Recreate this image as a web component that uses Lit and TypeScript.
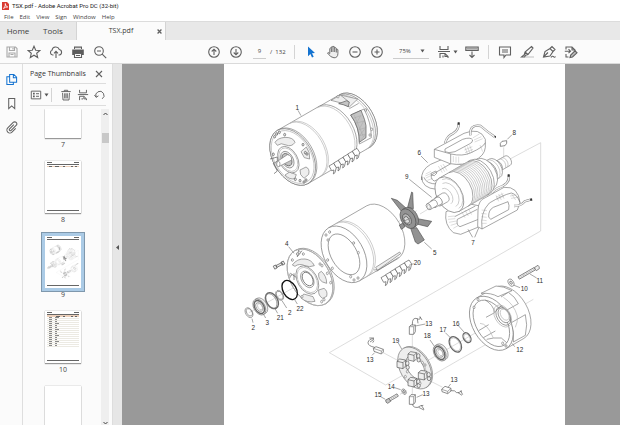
import { LitElement, html, svg, css } from "lit";
import { customElement } from "lit/decorators.js";

/* ---------- geometry helpers for the exploded view ---------- */
const COS = 0.866;
const SIN = 0.5;

// Circle of radius a seen along the machine axis.
const disc = (x: number, y: number, a: number, cls = "", k = 0.64) =>
  svg`<ellipse class=${cls} rx=${a} ry=${a * k} transform="translate(${x} ${y}) rotate(60)"></ellipse>`;

// Only the far half of such a circle, at a distance along the axis.
const seam = (x: number, y: number, a: number, d: number, cls = "lt") => {
  const cx = x + d * COS;
  const cy = y - d * SIN;
  return svg`<path class="nf ${cls}" d="M${cx - a * SIN} ${cy - a * COS}A${a} ${a * 0.64} 60 0 1 ${cx + a * SIN} ${cy + a * COS}"></path>`;
};

// Cylinder whose near face is centred on x, y.
const tube = (x: number, y: number, a: number, len: number, cls = "") => {
  const ex = x + len * COS;
  const ey = y - len * SIN;
  const dx = a * SIN;
  const dy = a * COS;
  return svg`<path class=${cls} d="M${x - dx} ${y - dy}L${ex - dx} ${ey - dy}A${a} ${a * 0.64} 60 0 1 ${ex + dx} ${ey + dy}L${x + dx} ${y + dy}Z"></path>${disc(x, y, a, cls)}`;
};

const bearing = (x: number, y: number) => svg`
  ${tube(x, y, 26, 7, "gr")}${disc(x, y, 21, "nf thick")}${disc(x, y, 14, "")}${disc(x + 2, y - 1, 10, "nf lt")}`;

const comb = (x: number, y: number) => svg`<g transform="translate(${x} ${y})">
  ${[0, 1, 2, 3, 4, 5].map(
    (i) => svg`<path class="dk" d="M${i * 14} ${-i * 9}l-8 -14l14 -8l8 12l-4 16l-5 4l2 -12z"></path>`
  )}</g>`;

const wire = (d: string) => svg`<path class="w1" d=${d}></path><path class="w2" d=${d}></path>`;

const screw = (x: number, y: number, len: number) => svg`
  <g transform="translate(${x} ${y}) rotate(-30)">
    <path class="dk" d="M0 -4h${len}v8h${-len}z"></path>
    <path class="nf lt" d="M2 0h${len - 4}M${len * 0.3} -4v8M${len * 0.5} -4v8M${len * 0.7} -4v8"></path>
  </g>`;

const holes = (pts: number[][]) =>
  pts.map(([x, y]) => svg`<ellipse cx=${x} cy=${y} rx="3" ry="4"></ellipse>`);

const holder = (x: number, y: number) => svg`<g class="gr dk" transform="translate(${x} ${y})">
  <path d="M-12 -8l8 -7l18 3v18l-8 8l-18 -4z"></path><path class="nf" d="M-12 -8l18 4l8 -8M6 -4v18"></path>
  <ellipse cx="19" cy="-2" rx="5" ry="7"></ellipse><ellipse cx="20" cy="10" rx="5" ry="6"></ellipse></g>`;

const guides = svg`<g class="guide">
  <path d="M600 462L640 438M870 297L962 248V513L328 878L497 975L590 922M642 943L885 803M600 915L940 718M510 500L590 452"></path>
  <path d="M851 262V308M577 822V870M577 975V1003M488 877L540 905M625 960L668 982M540 1003L560 992M87 758L262 660"></path>
</g>`;

const motor = svg`
  ${tube(404, 183, 91, 0)}
  ${tube(340, 220, 91, 68)}
  ${seam(340, 220, 91, 62)}
  <path class="gr" d="M333 121l28 -16l52 12l-25 24q-25 -15 -55 -20z"></path>
  <path class="dk mid" d="M356 131l24 -9l8 4l-3 14q-15 -7 -29 -9z"></path>
  <path class="nf" d="M388 146l28 -16M361 105l25 20"></path>
  <path d="M392 165l40 -18q22 40 22 86l-36 19q2 -48 -26 -87z"></path>
  <path class="mid dk" d="M392 165l31 -14l4 10q8 18 11 36v36l-20 14q1 -45 -26 -82z"></path>
  <path class="hl" d="M402 174l20 -7l-13 23l22 -7l-14 26l20 -6l-18 24l18 -5l-16 20M402 164l28 66"></path>
  ${holes([[354, 110], [437, 150], [455, 208], [450, 225]])}
  ${tube(218, 291, 92, 144)}
  ${seam(218, 291, 92, 45)}${seam(218, 291, 92, 40)}${seam(218, 291, 91, 138)}
  ${comb(335, 332)}
  ${tube(218, 291, 92, 5)}
  ${disc(218, 291, 86, "nf lt")}
  <path class="gr" d="M165 247q8 -13 30 -15q25 0 30 15q-10 15 -27 8q-15 -8 -26 1z"></path>
  <path class="gr" d="M243 275l16 -14q12 15 10 36l-16 -4zM240 330l18 -9q12 5 8 22l-14 12q-14 -10 -12 -25zM195 345l14 -9l20 8l-5 12q-15 4 -29 -11z"></path>
  <path class="nf dk" d="M150 297l22 -6v12l-12 8l12 22l-10 8"></path>
  ${disc(205, 299, 43, "")}${disc(205, 299, 38, "nf lt")}${disc(202, 299, 27, "gr")}${disc(201, 299, 20, "mid dk")}
  <path d="M202 284q14 2 13 16l-39 20q-7 -5 -5 -15z"></path><ellipse cx="175" cy="312" rx="5" ry="8"></ellipse>
  <g class="gr dk">${holes([[170, 222], [178, 217], [194, 224], [249, 254], [256, 278], [261, 282], [160, 283], [240, 362], [258, 360], [252, 366], [226, 358], [164, 230]])}</g>
  <path class="nf" d="M234 151l9 16"></path>`;

const rotor = svg`
  ${wire("M675 250Q680 228 700 220Q718 208 716 190")}
  <path d="M605 360Q602 330 632 313L690 288L760 300L700 380L650 388Q605 385 605 350Z"></path>
  <path class="nf" d="M634 345l60 -35l30 3M634 345q-2 15 10 18l40 -22M612 352q6 20 40 20M633 340l14 -7l4 6l-8 8l-9 -2z"></path>
  <path class="hl" d="M617 342l16 -8M616 348l18 -8M618 354l16 -8M622 361l16 -6M655 318l12 20M662 315l12 20M669 312l12 20"></path>
  <path d="M643 268L732 220Q780 200 796 238L796 262Q794 288 762 302Q730 318 690 311L643 292Z"></path>
  <path class="nf" d="M643 268l50 14q35 8 60 -4q38 -17 43 -30M692 282v28"></path>
  <path d="M675 267L728 238Q752 230 758 240Q758 248 748 252L705 275Q684 281 675 275Z"></path>
  <path class="hl" d="M735 262l8 22M742 259l8 22M749 256l8 22M733 270l24 -10M735 278l24 -10M758 234l20 -12M762 240l22 -10M764 246l24 -10M700 288v18M708 290v18M716 290v18M780 255l8 20"></path>
  ${wire("M751 226Q748 192 782 198Q800 214 826 232")}
  <path d="M678 455Q672 495 700 518L722 523L790 495L790 440L740 430Z"></path>
  <path class="nf" d="M712 478l60 -30M712 478q-4 18 8 22l55 -22M704 470l62 -32"></path>
  <path class="hl" d="M684 470l20 -2M684 478l22 -2M687 487l22 -4M692 496l20 -6M700 505l14 -8M725 455l10 18M735 450l10 18M745 446l10 18"></path>

  ${tube(835, 318, 16, 32)}
  ${seam(835, 318, 16, 12)}${seam(835, 318, 16, 20)}
  ${tube(808, 334, 32, 18)}${seam(808, 334, 32, 10)}
  ${tube(780, 350, 50, 18)}
  ${tube(688, 404, 58, 106)}
  ${[32, 38, 44, 50, 56, 62, 68, 74, 80, 86, 92, 98].map((d) => seam(688, 404, 58, d, d === 32 || d === 98 ? "" : "lt"))}
  ${seam(688, 404, 50, 4)}${seam(684, 407, 40, 4)}${seam(676, 411, 26, 4)}
  ${tube(655, 424, 15, 24)}
  ${tube(640, 432, 12, 20)}${tube(626, 440, 10, 22)}${disc(626, 440, 6, "nf lt")}

  ${wire("M815 400Q824 386 848 378Q870 366 866 346")}
  <path d="M774 450Q775 420 796 413L852 382Q895 378 900 428L892 450L786 507L773 500Z"></path>
  <path class="nf" d="M786 507q-6 -50 22 -78q40 -24 66 -30q18 4 26 29"></path>
  <path d="M806 471Q805 450 820 442L864 425Q869 436 866 449L812 478Z"></path>
  <path class="hl" d="M828 406l8 18M836 402l8 18M844 398l8 18M828 412l22 -11M830 419l22 -11M875 402l12 18M870 408l20 -3M873 415l20 -3M785 450l16 2M784 460l16 2M784 470l16 2M784 480l16 2M786 490l14 0"></path>
  ${wire("M882 438Q904 438 914 424L932 419")}
  <path class="blk" d="M713 187h6v7h-6zM822 229l6 -1v7zM863 343h6v7h-6zM930 416l6 -1l1 7l-6 0z"></path>
  <path class="dk" d="M841 250l5 -6l14 -2v8l-5 7l-14 2z"></path>
  <path class="nf" d="M862 238l14 -14M603 288l20 20M568 358l67 54M744 508l14 24M776 504l-12 28"></path>`;

const stator = svg`
  ${tube(372, 583, 92, 132)}
  ${seam(372, 583, 92, 24)}${seam(372, 583, 92, 30)}
  <path class="gr" d="M467 622l72 -46l3 5l-70 50z"></path><path class="nf" d="M462 630l10 -1M470 634l66 -42"></path>
  ${disc(372, 583, 67, "", 0.58)}
  ${holes([[318, 525], [324, 540], [329, 516], [323, 600], [401, 549], [337, 625], [415, 578], [402, 660], [414, 654], [392, 650]])}
  ${comb(491, 667)}
  <path class="nf" d="M567 616l14 -5"></path>`;

const fan = svg`<g class="fan">
  <path d="M514 415L532 421L560 446L548 459Z"></path>
  <path d="M575 396L578 398L580 446L563 442Z"></path>
  <path d="M592 476L635 484L623 500L590 492Z"></path>
  <path d="M572 505L590 503L613 540L594 552L586 546Z"></path>
  <path d="M538 495L551 488L554 501L544 508Z"></path>
  ${tube(564, 476, 32, 9)}${disc(561, 478, 18, "mid")}${disc(560, 480, 11, "hub")}
  </g><path class="nf" d="M548 486l24 -13M613 547l22 20"></path>`;

const flange = svg`
  ${tube(270, 652, 92, 5)}${disc(270, 652, 92, "nf lt")}
  <path class="gr" d="M217 615q14 -20 38 -18q20 2 28 20q-15 6 -28 0q-18 -8 -30 2z"></path>
  <path class="gr" d="M296 640l8 -6q16 14 16 36l-12 -4q-14 -8 -12 -26zM296 690l16 -5q12 8 8 24l-12 6q-14 -8 -12 -25zM243 714l8 -12l28 8l6 14q-24 6 -42 -10z"></path>
  <path class="nf dk" d="M210 653q-2 -10 6 -10l14 10M222 640v20M236 570l-4 20l14 -18"></path>
  ${disc(262, 660, 46, "")}${disc(262, 660, 41, "nf lt")}${disc(262, 658, 27, "")}${disc(263, 657, 22, "nf dk")}
  ${holes([[232, 582], [238, 577], [250, 582], [300, 612], [306, 617], [212, 644], [246, 710], [305, 725], [312, 719], [332, 668], [322, 640], [217, 600]])}
  <g transform="translate(162 623) rotate(-27)"><path class="gr dk" d="M0 -5h8v10h-8zM8 -3h20v6h-20zM26 -5h8v10h-8z"></path></g>
  <path class="nf" d="M206 560l16 20"></path>`;

const frontParts = svg`
  ${disc(209, 690, 31, "nf ring")}
  ${disc(179, 706, 16, "nf")}${disc(179, 706, 13, "nf")}
  ${disc(156, 722, 26, "nf thick")}${disc(153, 723, 24, "nf")}
  ${bearing(118, 741)}
  ${disc(87, 758, 16, "nf")}${disc(88, 757, 12, "nf")}
  <path class="nf" d="M96 776l3 12M130 762l7 12M165 746l8 14M186 722l14 22M222 716l10 16"></path>`;

const housing = svg`
  ${tube(814, 790, 88, 62)}
  <path d="M783 700l45 -22q22 0 48 14l-42 18q-20 -12 -51 -10z"></path>
  <path d="M852 755l43 -24q-10 -22 -30 -34l-22 14M874 788l42 -24q8 30 0 62l-36 20q4 -30 -6 -58z"></path>
  ${disc(814, 790, 76, "", 0.6)}
  <path class="nf" d="M776 812l30 -18M796 720q24 15 28 38l-26 14M790 833l36 -20M800 838q20 -6 44 -4l16 14M846 735l-20 20"></path>
  <path class="nf lt" d="M850 712q32 20 42 56q2 18 -6 34M780 790q22 0 40 44"></path>
  ${disc(848, 768, 36, "nf lt")}${disc(850, 768, 30, "nf")}${disc(852, 766, 24, "")}${disc(854, 764, 18, "nf lt")}
  ${holes([[774, 718], [858, 858], [762, 742], [848, 850]])}
  ${disc(873, 668, 12, "")}${disc(873, 668, 5, "dk")}
  ${screw(896, 654, 56)}<path class="gr dk" d="M944 622l10 -6q5 4 4 10l-9 6q-5 -4 -5 -10z"></path>
  <path class="nf" d="M930 642l20 12M880 675l20 8M876 850l8 10"></path>`;

const brushes = svg`
  ${tube(584, 924, 68, 4, "gr")}${disc(586, 922, 39, "", 0.6)}${seam(586, 922, 39, 3)}
  ${holder(576, 890)}${holder(543, 912)}${holder(607, 946)}${holder(576, 967)}
  ${holes([[607, 908], [615, 915], [562, 935], [556, 950], [600, 970]])}
  ${[
    ["M568 800l5 -5h13v20l-5 8h-13z", "M568 800h13l5 -5M581 800v22", "M577 795Q576 770 592 776Q602 782 600 770M592 776l2 14M600 770l6 10"],
    ["M460 865l8 -5l22 8v8l-6 6l-22 -8z", "M460 865l24 8l6 -5M484 873v8", "M464 862Q444 858 444 848Q446 836 462 836M462 834l-14 0M462 838l-12 8M462 842l-4 6"],
    ["M665 988l10 -9l18 6v8l-10 8l-17 -6z", "M665 988l18 6l10 -9M683 994v7", "M692 992Q706 990 710 998Q716 1000 726 992M714 998l12 8M722 992l6 12"],
    ["M568 1010l5 -6h13v22l-5 7h-13z", "M568 1010h13l5 -6M581 1010v22", "M577 1033Q580 1044 594 1042Q600 1036 610 1036M596 1042l16 8M604 1036l8 12"]
  ].map(([box, edge, lead]) => svg`<path class="dk" d=${box}></path><path class="nf" d=${edge}></path><path class="nf lead" d=${lead}></path>`)}
  ${bearing(659, 879)}
  ${disc(706, 853, 25, "nf thick")}${disc(706, 853, 21, "nf lt")}
  ${disc(741, 833, 16, "nf thick")}${disc(741, 833, 12, "nf lt")}
  ${disc(552, 995, 9, "gr")}${disc(552, 995, 4, "dk")}
  ${screw(507, 1020, 30)}<path class="mid dk" d="M497 1020l10 -5l5 9l-9 6q-7 -2 -6 -10z"></path>
  <path class="nf" d="M586 798l30 -6M535 849l10 18M456 886l8 -8M692 972l-8 10M524 983l18 6M482 1010l14 8M590 1012l18 -8M630 840l14 20M676 818l16 16M716 798l16 18"></path>`;

const LABELS: [string, number, number][] = [
  ["1", 232, 144], ["8", 883, 218], ["6", 598, 278], ["9", 560, 350], ["7", 759, 548],
  ["5", 644, 577], ["20", 592, 607], ["4", 200, 552], ["2", 100, 803], ["3", 142, 789],
  ["21", 181, 773], ["2", 209, 758], ["22", 240, 745], ["11", 959, 661], ["10", 913, 687],
  ["12", 899, 870], ["13", 626, 790], ["16", 708, 790], ["17", 669, 809], ["18", 622, 828],
  ["19", 527, 841], ["13", 450, 898], ["13", 702, 958], ["14", 514, 980], ["15", 474, 1004],
  ["13", 618, 1002]
];

const parts = svg`${guides}${motor}${rotor}${stator}${fan}${flange}${frontParts}${housing}${brushes}`;

/* ---------- icons ---------- */
const ic = (body: unknown) => html`<svg class="ic" viewBox="0 0 14 14" aria-hidden="true">${body}</svg>`;

const icons = {
  save: ic(svg`<path d="M2 2h8.5L12 3.500V12H2zM4.500 2v3.500h5V2M4 12V8h6v4M5.500 9.500h3M8 3v1.500"></path>`),
  star: ic(svg`<path d="M7 1.200l1.700 4 4.200.3-3.200 2.800 1 4.200L7 10.200l-3.700 2.300 1-4.200L1.100 5.500l4.200-.3z"></path>`),
  cloud: ic(svg`<path d="M4.500 10H3.700A2.500 2.500 0 0 1 3 5.200 3.800 3.800 0 0 1 10.300 4.500 2.800 2.800 0 0 1 10.300 10H9.500M7 13V6.500M5 8.300l2-2 2 2"></path>`),
  print: ic(svg`<path class="s" d="M3 1.500h8V4H3zM1.200 4.500h11.600v5.500H11V8H3v2H1.200z"></path><path d="M3.500 8.500h7V12.500h-7zM5 10.500h4"></path><path class="wl" d="M4 3.300h6"></path>`),
  find: ic(svg`<circle cx="6" cy="6" r="4.300"></circle><path d="M4 6h4M9.200 9.200l4 4"></path>`),
  up: ic(svg`<circle cx="7" cy="7" r="5.300"></circle><path d="M7 10V4.500M4.700 6.500L7 4.200l2.300 2.300"></path>`),
  down: ic(svg`<circle cx="7" cy="7" r="5.300"></circle><path d="M7 4v5.500M4.700 7.500L7 9.800l2.300-2.300"></path>`),
  arrow: ic(svg`<path class="blue" d="M4 1.500l7 6.500-3 .3 1.700 3.500-1.700.8-1.600-3.500L4 11.200z"></path>`),
  hand: ic(svg`<path class="lg" d="M3.800 8.500V3.500q.9-1 1.500 0V2q.9-1 1.700 0v-.3q.9-.8 1.700.3V3q.8-.8 1.600.2V4.500q.9-.7 1.600.2V8.500q0 4.300-3.900 4.300Q4.800 12.800 1.500 8q.5-1.200 2.300.5M5.400 3.500V7M7 2v5M8.700 3v4M10.300 4.500V7.500"></path>`),
  minus: ic(svg`<circle cx="7" cy="7" r="5.300"></circle><path d="M4.500 7h5"></path>`),
  plus: ic(svg`<circle cx="7" cy="7" r="5.300"></circle><path d="M4.500 7h5M7 4.500v5"></path>`),
  fit: ic(svg`<path d="M3 1v3.500h8V1M1 6.500h12M3 13V8.500h5l3 3V13M8 8.500v3h3M6 10.500v2"></path>`),
  scroll: ic(svg`<path class="d" d="M.8 2h12.400v3.500H.8z"></path><path d="M2.500 3.800h9" stroke-dasharray="1 1"></path><path d="M7 6.500v6M4.500 10l2.500 2.500L9.500 10"></path>`),
  note: ic(svg`<path d="M1.500 2h11v8H8L6 12.500V10H1.500zM4 5h6M4 7h6"></path>`),
  marker: ic(svg`<path class="pale" d="M3 11h11v2H5z"></path><path d="M11.500 1.500l1.500 1.500-5 6.500-3 .8-.7-.7L5 7zM5 7l3 2.500M4.300 9.600L1.500 12h3l1-1.500"></path>`),
  sign: ic(svg`<path d="M1.500 12L3 6.500 8 3.500l3 3L8 11zM1.500 12L6 7.500M8 3.500L10 1.500l3 3-2 2M9 12.500q1.500-2 2.500-.8t2-.2"></path>`),
  stamp: ic(svg`<path d="M2 4.500V2h6l3 3v1M8 2v3h3M.8 6.200h5.500M4.500 4.200l2 2-2 2M2 9v3h2.500"></path><path class="m" d="M6 12.500l.7-2.500L11 5.800 13 7.800 8.500 12z"></path>`),
  pages: ic(svg`<path d="M5 1.500h4.500l3 3V10H5zM9 1.500V5h3.500M5 4H2v8.500h7V10"></path>`),
  mark: ic(svg`<path d="M4 1.500h6.500V12.500L7.200 9.500 4 12.500z"></path>`),
  clip: ic(svg`<path d="M9.500 4L5 8.500a1 1 0 0 0 1.600 1.600L12 4.800a2.200 2.200 0 0 0-3.200-3.200L3 7.400A3.200 3.200 0 0 0 7.500 12l4-4"></path>`),
  close: ic(svg`<path d="M4 4l6 6M10 4l-6 6"></path>`),
  list: ic(svg`<path d="M1.500 2.500h11v9h-11zM7 5.500h3.500M7 8.500h3.500"></path><path class="s" d="M3.500 4.500h2v2h-2zM3.500 7.500h2v2h-2z"></path>`),
  trash: ic(svg`<path d="M1.500 3h11M5 3V1.500h4V3M3 4.500l.5 8.300h7l.5-8.300M5.500 5v6M7 5v6M8.500 5v6"></path>`),
  turn: ic(svg`<path d="M2.500 9.500A4.800 4.800 0 1 1 9.500 11.500M.5 7l2 2.700L5.200 8"></path>`)
};

const caret = html`<svg class="caret" viewBox="0 0 5 4" aria-hidden="true"><path d="M0.500 0.500h4L2.500 3.500z"></path></svg>`;

const btn = (icon: unknown, label: string, cls = "") =>
  html`<button class="tb ${cls}" aria-label=${label}>${icon}</button>`;

@customElement("app-root")
export class AppRoot extends LitElement {
  static styles = css`
    :host {
      display: flex;
      flex-direction: column;
      height: 100vh;
      overflow: hidden;
      background: #fff;
      color: #444;
      font: 6px/10px "Open Sans", "Noto Sans", sans-serif;
    }
    * { box-sizing: border-box; }
    button, input, select {
      border: 0; padding: 0; margin: 0; background: none; color: inherit; font: inherit;
      border-radius: 0; appearance: none;
    }
    button { display: flex; align-items: center; }
    .title { display: flex; align-items: center; gap: 3px; height: 12px; padding-left: 2px; color: #222; font-family: Roboto, sans-serif; }
    .logo { width: 7px; height: 8px; }
    .menu { display: flex; gap: 6px; height: 9px; padding-left: 4px; align-items: center; }
    .tabs { display: flex; height: 19px; background: #e8e8e8; border-top: 1px solid #dcdcdc; font-size: 8px; color: #3c3c3c; }
    .tabs button { justify-content: center; }
    .home { width: 36px; }
    .tools { width: 40px; padding-right: 6px; }
    .tab { display: flex; align-items: center; width: 90px; background: #fbfbfb; border-left: 1px solid #d4d4d4; border-right: 1px solid #d4d4d4; font-size: 7px; }
    .tab .name { flex: 1; padding-left: 12px; }
    .tab .x { width: 12px; height: 12px; }
    .tab .ic { width: 9px; height: 9px; stroke-width: 2; }
    .bar { display: flex; align-items: center; height: 24px; padding-left: 1px; background: #fbfbfb; border-bottom: 1px solid #dadada; }
    .tb { width: 22px; height: 20px; justify-content: center; flex: none; }
    .ic { width: 14px; height: 14px; fill: none; stroke: #606060; stroke-width: 1.1; display: block; flex: none; }
    .ic .s { fill: #5c5c5c; stroke: none; }
    .ic .m { fill: #bbb; }
    .ic .d { fill: #ccc; }
    .ic .lg { fill: #eee; stroke-width: 0.9; }
    .ic .wl { stroke: #fff; }
    .ic .pale { fill: #ddd; stroke: none; }
    .ic .blue { fill: #1473d0; stroke: none; }
    .off .ic { stroke: #a8a8a8; }
    .on .ic { stroke: #1473d0; }
    .caret { width: 5px; height: 4px; fill: #555; flex: none; display: block; }
    .gapa { flex: 92; }
    .gapb { flex: 38; }
    .pg { width: 13px; height: 14px; margin-left: 6px; text-align: center; border-bottom: 1px solid #ccc; flex: none; }
    .of { width: 28px; padding-left: 4px; white-space: pre; flex: none; }
    .sep { width: 1px; height: 14px; background: #d4d4d4; flex: none; margin-right: 5px; }
    .late { margin-left: 5px; }
    .zoom { display: flex; align-items: center; width: 36px; margin: 0 4px 0 5px; border-bottom: 1px solid #ccc; height: 14px; flex: none; }
    .zoom select { width: 27px; padding-left: 6px; }
    .wide { width: 28px; gap: 2px; }
    .main { flex: 1; display: flex; min-height: 0; background: #fbfbfb; }
    .rail { width: 23px; display: flex; flex-direction: column; gap: 4px; padding-top: 5px; border-right: 1px solid #dedede; flex: none; }
    .rail .ic { width: 13px; height: 13px; }
    .panel { width: 89px; flex: none; display: flex; flex-direction: column; }
    .head { display: flex; align-items: center; justify-content: space-between; height: 20px; margin: 0 6px 0 7px; color: #333; border-bottom: 1px solid #ddd; }
    .head .tb { width: 14px; }
    .head h2 { font: inherit; font-size: 7px; margin: 0; white-space: nowrap; }
    .ops { display: flex; align-items: center; height: 22px; margin: 0 6px 0 7px; border-bottom: 1px solid #ddd; }
    .ops .tb { width: 17px; }
    .ops .ic { width: 12px; height: 12px; }
    .ops .wide { width: 21px; justify-content: flex-start; }
    .scroll { flex: 1; display: flex; min-height: 0; margin-top: 3px; }
    .list { flex: 1; overflow: hidden; display: flex; flex-direction: column; align-items: center; padding-left: 2px; }
    figure { margin: 0; flex: none; }
    .sheet { display: block; width: 36px; height: 52px; background: #fff; box-shadow: 0 1px 1px #999, 0 0 1px #999; overflow: hidden; }
    .cut { height: 29px; }
    .sel { box-shadow: 0 0 0 3px #abcbe6, 0 0 0 4px #7f98ad; }
    figcaption { height: 23px; line-height: 14px; text-align: center; font-size: 7px; }
    .track { width: 8px; margin-right: 3px; background: #efefef; display: flex; flex-direction: column; align-items: center; justify-content: space-between; overflow: hidden; }
    .track .upper { display: flex; flex-direction: column; align-items: center; gap: 17px; padding-top: 3px; }
    .thumb { width: 7px; height: 10px; background: #c8c8c8; }
    .chev { width: 5px; height: 4px; fill: none; stroke: #444; display: block; flex: none; }
    .split { width: 10px; flex: none; background: #e6e6e6; display: flex; border-left: 1px solid #ddd; }
    .split button { width: 100%; height: 10px; margin-top: 178px; justify-content: center; }
    .split svg { width: 3px; height: 5px; fill: #555; }
    .view { flex: 1; min-width: 0; overflow: hidden; background: #999; display: grid; grid-template-columns: 102fr 341fr 55fr; }
    .page { grid-column: 2; background: #fff; min-height: 100%; }
    .page svg { display: block; width: 100%; }
    .art { fill: #fff; stroke: #7a7a7a; stroke-width: 2; stroke-linejoin: round; }
    .art .nf { fill: none; }
    .art .lt { stroke: #b4b4b4; }
    .art .dk, .art .dk * { stroke: #555; }
    .art .gr { fill: #eee; }
    .art .mid { fill: #c4c4c4; }
    .art .hl { fill: none; stroke: #999; stroke-width: 1; }
    .art .thick { stroke: #666; stroke-width: 4; }
    .art .ring { stroke: #111; stroke-width: 4; }
    .art .lead { stroke: #555; stroke-width: 2; }
    .art .blk { fill: #333; stroke: none; }
    .art .w1 { fill: none; stroke: #808080; stroke-width: 7; }
    .art .w2 { fill: none; stroke: #f4f4f4; stroke-width: 4; }
    .art .guide { fill: none; stroke: #ccc; }
    .art .guide path { fill: none; }
    .fan { stroke: #505050; }
    .fan ellipse, .fan path { fill: #929292; }
    .fan .mid { fill: #b4b4b4; }
    .fan .hub { fill: #ddd; }
    .art text { fill: #2c2c2c; stroke: none; font: 19px "Liberation Sans", sans-serif; text-anchor: middle; }
    .mini .art { stroke: #aaa; stroke-width: 3; }
    .mini .rule { fill: #666; }
    .mini .ink { fill: #8a8a8a; }
    .mini .grid { fill: #eceae3; }
    .mini .warm { fill: #ecd0bb; }
  `;

  private sheet(n: number) {
    const marks = svg`<path class="rule" d="M2 1h5v1h-5zM29 1h5v1h-5zM2 3h32v1h-32zM2 49h32v1h-32z"></path>`;
    const cls = `sheet mini ${n === 7 ? "cut" : ""} ${n === 9 ? "sel" : ""}`;
    const body =
      n === 8
        ? svg`${marks}<path class="warm" d="M2 5h32v1h-32z"></path><path class="rule" d="M4 5h3v1h-3zM10 5h4v1h-4zM18 5h2v1h-2zM26 5h2v1h-2zM30 5h2v1h-2z"></path>`
        : n === 9
          ? svg`${marks}<svg x="0" y="6" width="36" height="38" viewBox="12 12 1023 1083"><g class="art">${parts}</g></svg>`
          : n === 10
            ? svg`${marks}<path class="warm" d="M2 4h32v2h-32z"></path><path class="rule" d="M11 5h4v1h-4zM18 5h2v1h-2zM26 5h2v1h-2zM30 5h2v1h-2z"></path>
              ${Array.from({ length: 15 }, (_, i) => svg`<rect class="grid" x="2" y=${7 + i * 2} width="32" height="1"></rect><rect class="ink" x="4" y=${6 + i * 2} width="3" height="1"></rect><rect class="ink" x="10" y=${6 + i * 2} width=${i % 3 === 0 ? 4 : 2} height="1"></rect>`)}`
            : svg``;
    return html`<figure>
      <svg class=${cls} viewBox="0 0 36 ${n === 7 ? 29 : 52}" role="img" aria-label="Page ${n}">${body}</svg>
      ${n < 11 ? html`<figcaption>${n}</figcaption>` : ""}
    </figure>`;
  }

  render() {
    return html`
      <header class="title">
        <svg class="logo" viewBox="0 0 7 8" aria-hidden="true"><path fill="#d93a32" d="M0 0h5l2 2v6H0z"></path><path fill="none" stroke="#fff" stroke-width=".8" d="M1.500 6.500Q4 4 3.300 1.500Q3 4 5.800 5Q3.500 4.800 1.500 6.500"></path></svg>
        <span>TSX.pdf - Adobe Acrobat Pro DC (32-bit)</span>
      </header>
      <nav class="menu" aria-label="Menu">
        ${["File", "Edit", "View", "Sign", "Window", "Help"].map((m) => html`<button>${m}</button>`)}
      </nav>
      <nav class="tabs" aria-label="Documents">
        <button class="home">Home</button>
        <button class="tools">Tools</button>
        <div class="tab"><button class="name">TSX.pdf</button><button class="x" aria-label="Close tab">${icons.close}</button></div>
      </nav>
      <div class="bar" role="toolbar">
        ${btn(icons.save, "Save", "off")}${btn(icons.star, "Star")}${btn(icons.cloud, "Upload")}${btn(icons.print, "Print")}${btn(icons.find, "Find")}
        <span class="gapa"></span>
        ${btn(icons.up, "Previous page")}${btn(icons.down, "Next page")}
        <input class="pg" aria-label="Page number" value="9" /><span class="of">/  132</span>
        <span class="sep"></span>
        ${btn(icons.arrow, "Select")}${btn(icons.hand, "Pan")}${btn(icons.minus, "Zoom out")}${btn(icons.plus, "Zoom in")}
        <label class="zoom"><select aria-label="Zoom level"><option>75%</option></select>${caret}</label>
        <button class="tb wide" aria-label="Fit page">${icons.fit}${caret}</button>
        ${btn(icons.scroll, "Page display")}
        <span class="sep late"></span>
        ${btn(icons.note, "Comment")}${btn(icons.marker, "Highlight")}${btn(icons.sign, "Sign")}${btn(icons.stamp, "Edit page")}
        <span class="gapb"></span>
      </div>
      <div class="main">
        <nav class="rail" aria-label="Panels">${btn(icons.pages, "Page thumbnails", "on")}${btn(icons.mark, "Bookmarks")}${btn(icons.clip, "Attachments")}</nav>
        <aside class="panel">
          <div class="head"><h2>Page Thumbnails</h2>${btn(icons.close, "Close panel")}</div>
          <div class="ops">
            <button class="tb wide" aria-label="Options">${icons.list}${caret}</button><span class="sep"></span>
            ${btn(icons.trash, "Delete")}${btn(icons.fit, "Insert")}${btn(icons.turn, "Rotate")}
          </div>
          <div class="scroll">
            <div class="list">${[7, 8, 9, 10, 11].map((n) => this.sheet(n))}</div>
            <div class="track">
              <div class="upper"><svg class="chev" viewBox="0 0 5 4"><path d="M.5 3l2-2 2 2"></path></svg><div class="thumb"></div></div>
              <svg class="chev" viewBox="0 0 5 4"><path d="M.5 1l2 2 2-2"></path></svg>
            </div>
          </div>
        </aside>
        <div class="split"><button aria-label="Collapse panel"><svg viewBox="0 0 3 5"><path d="M3 0v5L0 2.500z"></path></svg></button></div>
        <main class="view">
          <div class="page">
            <svg viewBox="12 12 1023 1083" role="img" aria-label="Exploded view of an electric motor">
              <g class="art">${parts}${LABELS.map(([t, x, y]) => svg`<text x=${x} y=${y + 7}>${t}</text>`)}</g>
            </svg>
          </div>
        </main>
      </div>
    `;
  }
}
